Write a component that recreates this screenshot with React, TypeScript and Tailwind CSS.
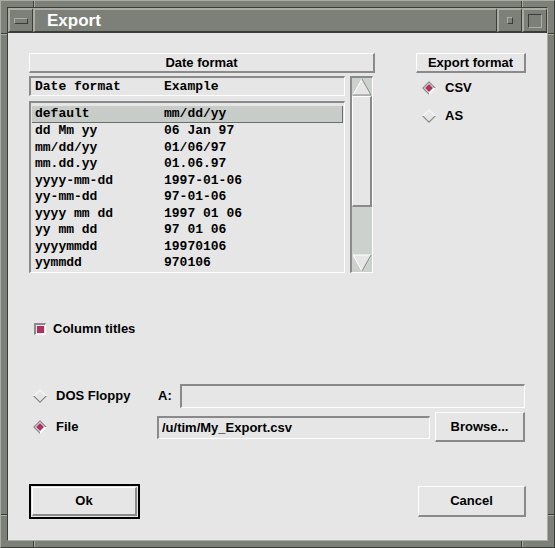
import React from "react";

const rows: [string, string][] = [
  ["default", "mm/dd/yy"],
  ["dd Mm yy", "06 Jan 97"],
  ["mm/dd/yy", "01/06/97"],
  ["mm.dd.yy", "01.06.97"],
  ["yyyy-mm-dd", "1997-01-06"],
  ["yy-mm-dd", "97-01-06"],
  ["yyyy mm dd", "1997 01 06"],
  ["yy mm dd", "97 01 06"],
  ["yyyymmdd", "19970106"],
  ["yymmdd", "970106"],
];

function Diamond({ on }: { on?: boolean }) {
  return (
    <svg width="14" height="14" viewBox="0 0 14 14" className="block">
      {on ? (
        <>
          <polygon points="7,0 14,7 7,14 0,7" fill="#ffffff" />
          <polygon points="7,0 0,7 7,14 7,12 2,7 7,2 12,7 14,7" fill="#8a8a8a" />
          <polygon points="7,3 11,7 7,11 3,7" fill="#b03060" />
        </>
      ) : (
        <>
          <polygon points="7,0 14,7 7,14 0,7" fill="#f4f4f4" />
          <polygon points="0,7 7,14 14,7 12,7 7,12 2,7" fill="#8a8a8a" />
          <polygon points="2,7 7,2 12,7 7,12" fill="#e6e6e6" />
        </>
      )}
    </svg>
  );
}

function VNotch({ x, y }: { x: number; y: number }) {
  return (
    <div className="absolute flex h-[6px]" style={{ left: x, top: y }}>
      <div className="w-[1px] h-full bg-[#3a3e38]" />
      <div className="w-[1px] h-full bg-[#a9ada2]" />
    </div>
  );
}

function HNotch({ x, y }: { x: number; y: number }) {
  return (
    <div className="absolute flex flex-col w-[6px]" style={{ left: x, top: y }}>
      <div className="h-[1px] w-full bg-[#3a3e38]" />
      <div className="h-[1px] w-full bg-[#a9ada2]" />
    </div>
  );
}

export default function App() {
  const sans = { fontFamily: '"Liberation Sans", Arial, sans-serif' };
  const mono = { fontFamily: '"Liberation Mono", "Courier New", monospace' };
  return (
    <div className="w-[555px] h-[548px] relative bg-[#7c8078] border-t border-l border-t-[#a9ada2] border-l-[#a9ada2] border-b border-r border-b-[#3a3e38] border-r-[#3a3e38] p-[6px]" style={sans}>
      <VNotch x={32} y={0} />
      <VNotch x={520} y={0} />
      <VNotch x={32} y={540} />
      <VNotch x={520} y={540} />
      <HNotch x={0} y={32} />
      <HNotch x={547} y={32} />
      <HNotch x={0} y={513} />
      <HNotch x={547} y={513} />
      <div className="w-full h-full flex flex-col border-t border-l border-t-[#3a3e38] border-l-[#3a3e38] border-b border-r border-b-[#a9ada2] border-r-[#a9ada2]">
        {/* title bar */}
        <div className="flex h-[25px] shrink-0 border-b border-b-[#3a3e38]">
          <div className="w-[25px] flex items-center justify-center border-t-2 border-l-2 border-t-[#a9ada2] border-l-[#a9ada2] border-b border-r border-b-[#3a3e38] border-r-[#3a3e38]">
            <div className="w-[14px] h-[6px] border-t border-l border-t-[#a9ada2] border-l-[#a9ada2] border-b border-r border-b-[#3a3e38] border-r-[#3a3e38]" />
          </div>
          <div className="flex-1 flex items-center pl-[12px] text-white text-[17px] font-bold border-t-2 border-l-2 border-t-[#a9ada2] border-l-[#a9ada2] border-b border-r border-b-[#3a3e38] border-r-[#3a3e38]">
            Export
          </div>
          <div className="w-[25px] flex items-center justify-center border-t-2 border-l-2 border-t-[#a9ada2] border-l-[#a9ada2] border-b border-r border-b-[#3a3e38] border-r-[#3a3e38]">
            <div className="w-[6px] h-[7px] border-t border-l border-t-[#a9ada2] border-l-[#a9ada2] border-b border-r border-b-[#3a3e38] border-r-[#3a3e38]" />
          </div>
          <div className="w-[25px] flex items-center justify-center border-t-2 border-l-2 border-t-[#a9ada2] border-l-[#a9ada2] border-b border-r border-b-[#3a3e38] border-r-[#3a3e38]">
            <div className="w-[14px] h-[14px] border-t border-l border-t-[#3a3e38] border-l-[#3a3e38] border-b border-r border-b-[#a9ada2] border-r-[#a9ada2]" />
          </div>
        </div>
        {/* client */}
        <div className="flex-1 bg-[#e6e6e6] pl-[21px] pt-[20px] text-[13px] font-bold text-black flex flex-col">
          <div className="flex">
            <div className="w-[346px]">
              <div className="h-[20px] flex items-center justify-center border-t border-l border-t-white border-l-white border-b-2 border-r-2 border-b-[#8a8a8a] border-r-[#8a8a8a]">
                Date format
              </div>
              <div className="flex mt-[3px]">
                <div className="w-[316px]">
                  <div className="h-[20px] flex items-center pl-[4px] border-t-2 border-l-2 border-t-[#8a8a8a] border-l-[#8a8a8a] border-b border-r border-b-white border-r-white whitespace-pre" style={mono}>
                    <span className="w-[129px]">Date format</span>
                    <span>Example</span>
                  </div>
                  <div className="h-[172px] mt-[5px] pt-[3px] px-[1px] border-t-2 border-l-2 border-t-[#8a8a8a] border-l-[#8a8a8a] border-b border-r border-b-white border-r-white" style={mono}>
                    {rows.map(([a, b], i) => (
                      <div key={i} className={"h-[16.5px] flex items-center pl-[3px] whitespace-pre " + (i === 0 ? "bg-[#c8ccc8] border-b border-r border-b-[#6a6e6a] border-r-[#6a6e6a]" : "")}>
                        <span className="w-[129px]">{a}</span>
                        <span>{b}</span>
                      </div>
                    ))}
                  </div>
                </div>
                <div className="ml-[5px] w-[23px] h-[197px] flex flex-col bg-[#cdd1cd] border-t-2 border-l-2 border-t-[#8a8a8a] border-l-[#8a8a8a] border-b border-r border-b-white border-r-white">
                  <svg width="20" height="18" viewBox="0 0 20 18" className="block shrink-0">
                    <polygon points="10,1 19,17 1,17" fill="#e6e6e6" />
                    <polyline points="1,17 10,1" stroke="#ffffff" strokeWidth="1" fill="none" />
                    <polyline points="10,1 19,17 1,17" stroke="#8a8a8a" strokeWidth="1" fill="none" />
                  </svg>
                  <div className="h-[111px] bg-[#e6e6e6] border-t border-l border-t-white border-l-white border-b-2 border-r-2 border-b-[#8a8a8a] border-r-[#8a8a8a]" />
                  <div className="flex-1" />
                  <svg width="20" height="18" viewBox="0 0 20 18" className="block shrink-0">
                    <polygon points="1,1 19,1 10,17" fill="#e6e6e6" />
                    <polyline points="1,1 19,1" stroke="#ffffff" strokeWidth="1" fill="none" />
                    <polyline points="1,1 10,17" stroke="#ffffff" strokeWidth="1" fill="none" />
                    <polyline points="19,1 10,17" stroke="#8a8a8a" strokeWidth="1" fill="none" />
                  </svg>
                </div>
              </div>
            </div>
            <div className="ml-[41px] w-[110px]">
              <div className="h-[20px] flex items-center justify-center border-t border-l border-t-white border-l-white border-b-2 border-r-2 border-b-[#8a8a8a] border-r-[#8a8a8a]">
                Export format
              </div>
              <div className="flex items-center h-[16px] mt-[7px] pl-[6px] gap-[9px]">
                <Diamond on />
                <span>CSV</span>
              </div>
              <div className="flex items-center h-[16px] mt-[12px] pl-[6px] gap-[9px]">
                <Diamond />
                <span>AS</span>
              </div>
            </div>
          </div>

          <div className="flex items-center h-[20px] mt-[46px] pl-[5px] gap-[7px]">
            <div className="w-[12px] h-[12px] flex items-center justify-center border-t-2 border-l-2 border-t-[#8a8a8a] border-l-[#8a8a8a] border-b border-r border-b-white border-r-white">
              <div className="w-[7px] h-[7px] bg-[#b03060]" />
            </div>
            <span>Column titles</span>
          </div>

          <div className="flex items-center h-[24px] mt-[45px]">
            <div className="w-[27px] pl-[4px]"><Diamond /></div>
            <span className="w-[102px]">DOS Floppy</span>
            <span className="w-[22px]">A:</span>
            <div className="w-[345px] h-[24px] border-t-2 border-l-2 border-t-[#8a8a8a] border-l-[#8a8a8a] border-b border-r border-b-white border-r-white" />
          </div>

          <div className="flex items-center h-[30px] mt-[4px]">
            <div className="w-[27px] pl-[4px]"><Diamond on /></div>
            <span className="w-[101px]">File</span>
            <div className="w-[273px] h-[23px] flex items-center pl-[3px] border-t-2 border-l-2 border-t-[#8a8a8a] border-l-[#8a8a8a] border-b border-r border-b-white border-r-white">
              /u/tim/My_Export.csv
            </div>
            <div className="ml-[5px] w-[90px] h-[30px] flex items-center justify-center border-t border-l border-t-white border-l-white border-b-2 border-r-2 border-b-[#8a8a8a] border-r-[#8a8a8a]">
              Browse...
            </div>
          </div>

          <div className="flex mt-[42px]">
            <div className="w-[111px] h-[35px] border-2 border-black p-[1px]">
              <div className="w-full h-full flex items-center justify-center border-t border-l border-t-white border-l-white border-b-2 border-r-2 border-b-[#8a8a8a] border-r-[#8a8a8a]">
                Ok
              </div>
            </div>
            <div className="ml-[278px] mt-[2px] w-[108px] h-[31px] flex items-center justify-center border-t border-l border-t-white border-l-white border-b-2 border-r-2 border-b-[#8a8a8a] border-r-[#8a8a8a]">
              Cancel
            </div>
          </div>
        </div>
      </div>
    </div>
  );
}
